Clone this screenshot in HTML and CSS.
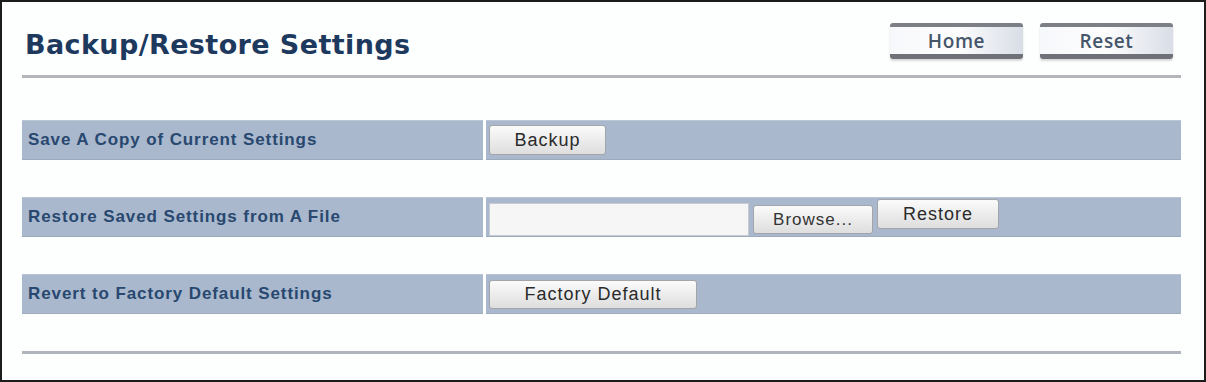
FILE: index.html
```html
<!DOCTYPE html>
<html lang="en">
<head>
  <meta charset="UTF-8">
  <title>Backup/Restore Settings</title>
  <link rel="stylesheet" href="styles.css">
</head>
<body>
  <div class="frame">
    <div class="header">
      <h1>Backup/Restore Settings</h1>
      <div class="nav">
        <button class="navbtn">Home</button>
        <button class="navbtn">Reset</button>
      </div>
    </div>

    <div class="rows">
      <div class="row">
        <div class="label">Save A Copy of Current Settings</div>
        <div class="value">
          <button class="btn btn-backup">Backup</button>
        </div>
      </div>

      <div class="row">
        <div class="label">Restore Saved Settings from A File</div>
        <div class="value">
          <input type="text" class="filename">
          <button class="btn btn-browse">Browse...</button>
          <button class="btn btn-restore">Restore</button>
        </div>
      </div>

      <div class="row">
        <div class="label">Revert to Factory Default Settings</div>
        <div class="value">
          <button class="btn btn-factory">Factory Default</button>
        </div>
      </div>
    </div>

    <div class="footline"></div>
  </div>
</body>
</html>
```

FILE: styles.css
```css
body {
  margin: 0;
  background: #fff;
  font-family: "Liberation Sans", Arial, sans-serif;
}
.frame {
  box-sizing: border-box;
  width: 1206px;
  height: 382px;
  border: 2px solid #1c1c1c;
  padding: 0 23px 0 20px;
  background: #fdfefe;
}
.header {
  display: flex;
  justify-content: space-between;
  align-items: flex-start;
  height: 73px;
  border-bottom: 3px solid #b3b5b9;
}
h1 {
  margin: 27px 0 0 3px;
  font-family: "DejaVu Sans", Verdana, sans-serif;
  font-weight: bold;
  font-size: 27px;
  letter-spacing: 0.4px;
  color: #1d3a5e;
}
.nav {
  display: flex;
  gap: 17px;
  margin: 21px 8px 0 0;
}
.navbtn {
  width: 133px;
  height: 36px;
  padding: 0;
  border: none;
  border-top: 4px solid #7c7f86;
  border-bottom: 5px solid #6e7178;
  border-radius: 3px;
  background: linear-gradient(to right, #f7f8fb, #fdfdfe 50%, #d9dde6);
  font-family: "Open Sans", sans-serif;
  font-weight: 600;
  font-size: 19px;
  letter-spacing: 0.6px;
  color: #46566a;
  box-shadow: 0 2px 2px #d8d8d8;
}
.rows {
  margin-top: 42px;
}
.row {
  display: grid;
  grid-template-columns: 461px 1fr;
  column-gap: 3px;
  height: 40px;
  margin-bottom: 37px;
}
.label, .value {
  background: #a9b8cd;
  border-top: 1px solid #bac6d6;
  border-bottom: 1px solid #9eabbd;
  display: flex;
  align-items: center;
}
.label {
  padding-left: 6px;
  font-weight: bold;
  font-size: 17px;
  letter-spacing: 0.9px;
  color: #284870;
}
.value {
  padding-left: 3px;
  gap: 4px;
}
.btn {
  height: 30px;
  padding: 0;
  border: 1px solid #a3a5a9;
  border-radius: 3px;
  background: linear-gradient(#fbfbfb, #ececec 50%, #dedede);
  font-family: "Liberation Sans", Arial, sans-serif;
  font-size: 18px;
  letter-spacing: 1px;
  color: #2a2a2a;
}
.btn-backup { width: 117px; }
.btn-browse {
  width: 120px;
  height: 29px;
  margin-top: 5px;
  font-size: 17px;
  color: #333;
}
.btn-restore {
  width: 122px;
  margin-bottom: 6px;
}
.btn-factory { width: 208px; height: 29px; }
.filename {
  box-sizing: border-box;
  width: 260px;
  height: 33px;
  margin-top: 4px;
  border: 1px solid #c8ccd2;
  background: #f6f6f6;
}
.footline {
  height: 3px;
  margin-top: 1px;
  background: #b0b4bc;
}
```
